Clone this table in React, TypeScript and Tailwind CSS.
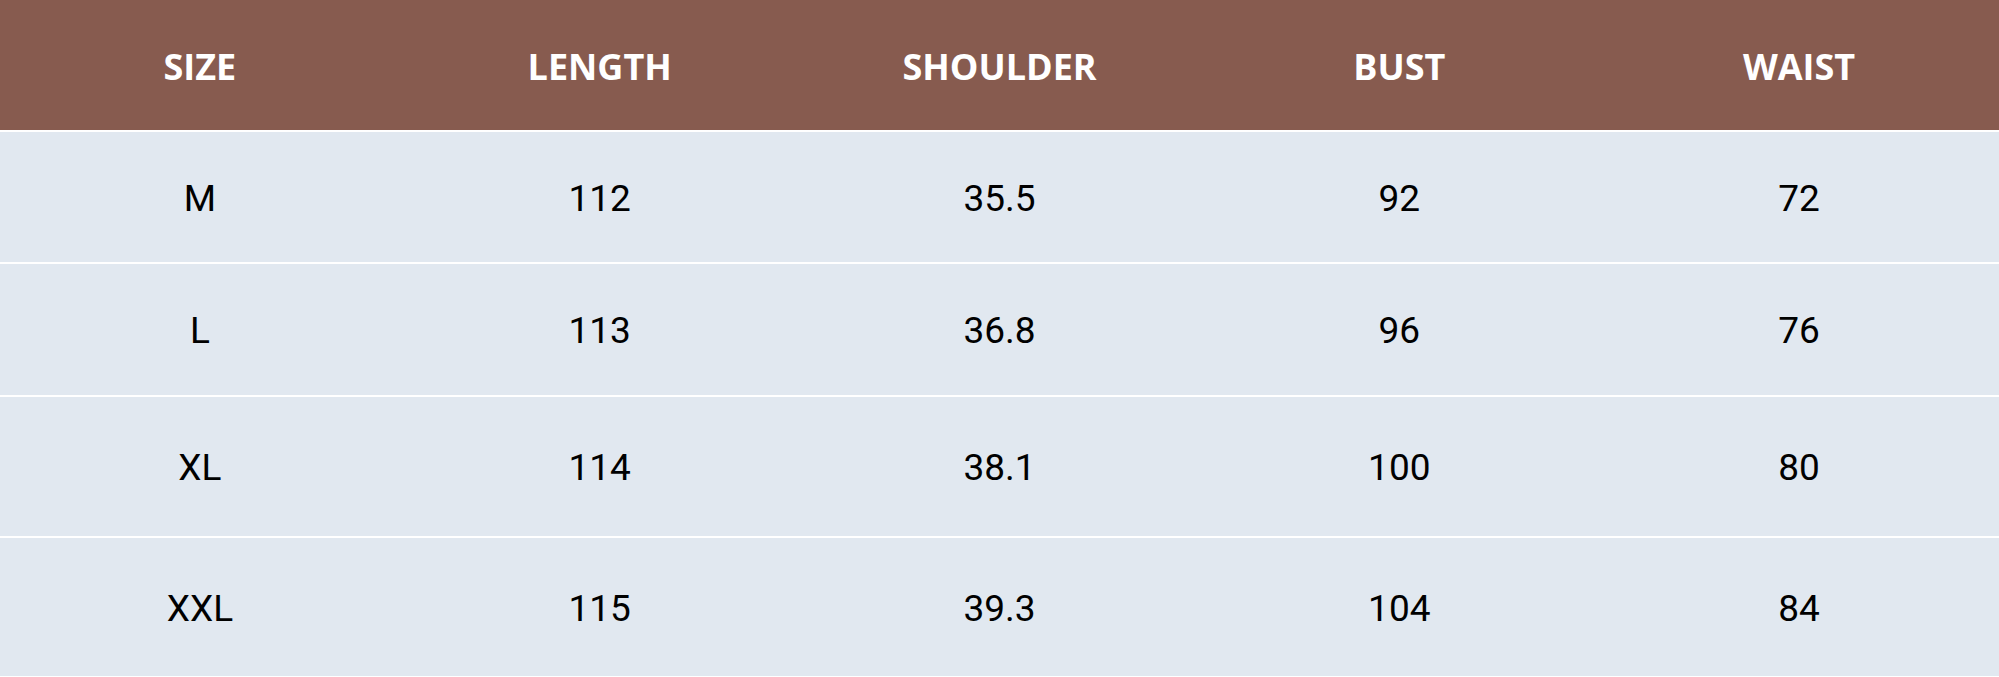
import React from "react";

const headers = ["SIZE", "LENGTH", "SHOULDER", "BUST", "WAIST"];
const rows = [
  { h: "h-[130px]", cells: ["M", "112", "35.5", "92", "72"] },
  { h: "h-[131px]", cells: ["L", "113", "36.8", "96", "76"] },
  { h: "h-[139px]", cells: ["XL", "114", "38.1", "100", "80"] },
  { h: "h-[138px]", cells: ["XXL", "115", "39.3", "104", "84"] },
];

export default function App() {
  return (
    <div className="w-[1999px] h-[677px] bg-white flex flex-col overflow-hidden">
      <div className="h-[130px] bg-[#875b4f] grid grid-cols-5 items-center pt-[3px]">
        {headers.map((t) => (
          <div
            key={t}
            className="text-center text-white font-bold text-[36px] leading-none font-['Open_Sans',sans-serif]"
          >
            {t}
          </div>
        ))}
      </div>
      {rows.map((r, i) => (
        <div
          key={i}
          className={`${r.h} mt-[2px] bg-[#e1e8f0] grid grid-cols-5 items-center pt-[2px]`}
        >
          {r.cells.map((c, j) => (
            <div
              key={j}
              className="text-center text-black text-[37px] font-normal leading-none font-['Roboto',sans-serif]"
            >
              {c}
            </div>
          ))}
        </div>
      ))}
    </div>
  );
}
